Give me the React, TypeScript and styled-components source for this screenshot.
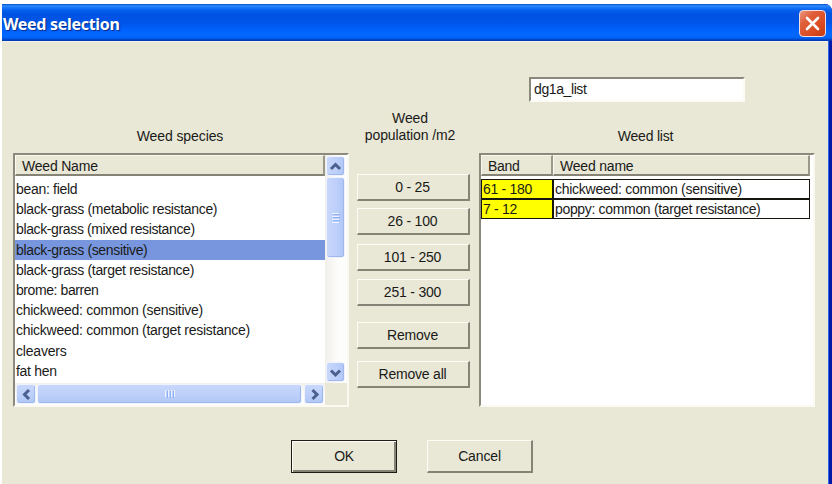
import React from 'react'
import styled, { createGlobalStyle, css } from 'styled-components'

type TextProps = { $tracking?: number }

const GlobalStyle = createGlobalStyle`
  * {
    box-sizing: border-box;
  }

  body {
    margin: 0;
    background: #fff;
    overflow: hidden;
    font-family: 'Liberation Sans', Arial, sans-serif;
    font-size: 14px;
    color: #1a1a18;
  }
`

const tracking = css<TextProps>`
  letter-spacing: ${({ $tracking = -0.3 }) => $tracking}px;
  white-space: nowrap;
`

// Main window
const StyledWindow = styled.div`
  display: flex;
  flex-direction: column;
  width: 830px;
  height: 480px;
  margin: 4px 0 0 2px;
  border-radius: 0 7px 0 0;
  overflow: hidden;
  background: #0019a8;
`

const StyledTitleBar = styled.header`
  display: flex;
  align-items: center;
  justify-content: space-between;
  flex: none;
  height: 37px;
  padding: 0 6px 0 1px;
  background: linear-gradient(
    to bottom,
    #0a50c8 0,
    #2f8cff 2px,
    #1f7dfb 3px,
    #0660ee 6px,
    #0053e2 10px,
    #0054e6 18px,
    #0060fb 25px,
    #0268ff 31px,
    #0062f4 34px,
    #0040bd 36px,
    #0038b0 37px
  );
`

const StyledTitle = styled.h1<TextProps>`
  ${tracking}
  margin: 3px 0 0;
  color: #fff;
  font-family: 'Noto Sans', sans-serif;
  font-size: 16px;
  line-height: 20px;
  font-weight: 700;
  text-shadow: 1px 1px 1px #0a2a86;
`

const StyledCloseButton = styled.button`
  display: flex;
  align-items: center;
  justify-content: center;
  width: 27px;
  height: 27px;
  margin-top: 1px;
  padding: 0;
  border: 1.5px solid #f3dfe0;
  border-radius: 4px;
  background: linear-gradient(135deg, #ea9a80 0%, #e0603c 30%, #d94a20 70%, #c23a12 100%);
`

const StyledBody = styled.main`
  flex: 1;
  margin-right: 4px;
  padding: 35px 0 0 11px;
  border-top: 1px solid #f4f3ea;
  background: #e9e8d7;
  box-shadow: 1px 0 0 #2a6ae8;
`

const StyledInput = styled.input`
  display: block;
  width: 216px;
  height: 25px;
  margin-left: 516px;
  padding: 0 3px 1px;
  border: 2px solid;
  border-color: #8a887a #fbfaf3 #fbfaf3 #8a887a;
  outline: 0;
  background: #fff;
  color: #1a1a18;
  font: inherit;
  letter-spacing: -0.4px;
`

const StyledColumns = styled.div`
  display: grid;
  grid-template-columns: 336px 130px 336px;
  height: 302px;
`

const StyledColumn = styled.section`
  display: flex;
  flex-direction: column;
`

const StyledLabel = styled.h2<TextProps & { $inset?: number }>`
  ${tracking}
  margin: 26px 0 8px;
  padding-right: ${({ $inset = 0 }) => $inset}px;
  font-size: 14px;
  line-height: 17px;
  font-weight: 400;
  text-align: center;
`

const StyledListBox = styled.div`
  flex: none;
  height: 254px;
  border: 2px solid;
  border-color: #8c8a7d #fbfaf2 #fbfaf2 #8c8a7d;
  background: #fff;
`

const StyledSpeciesGrid = styled.div`
  display: grid;
  grid-template-columns: 310px 22px;
  grid-template-rows: 228px 22px;
`

const StyledSpecies = styled.div`
  background: #fff;
  overflow: hidden;
`

const StyledHeader = styled.div`
  display: flex;
  height: 21px;
  margin-bottom: 3px;
`

const StyledHeaderCell = styled.div<TextProps & { $width: number }>`
  ${tracking}
  width: ${({ $width }) => $width}px;
  padding-left: 6px;
  border: solid;
  border-width: 1px 2px 2px 1px;
  border-color: #faf9f0 #9a9889 #858376 #faf9f0;
  background: #e9e8d7;
  line-height: 20px;
`

const StyledItem = styled.div<TextProps & { $selected?: boolean }>`
  ${tracking}
  height: 20.2px;
  padding-left: 1px;
  background: ${({ $selected }) => ($selected ? '#7796dd' : 'transparent')};
  line-height: 20px;
`

const StyledScrollbar = styled.div<{ $vertical?: boolean }>`
  display: flex;
  flex-direction: ${({ $vertical }) => ($vertical ? 'column' : 'row')};
  justify-content: space-between;
  padding: 1px;
  background: linear-gradient(${({ $vertical }) => ($vertical ? '90deg' : '180deg')}, #f0efea, #fdfdfb 60%);
`

const StyledScrollPiece = styled.div<{ $width: number; $height: number; $vertical?: boolean }>`
  display: flex;
  align-items: center;
  justify-content: center;
  width: ${({ $width }) => $width}px;
  height: ${({ $height }) => $height}px;
  border: 1px solid #eef3ff;
  border-radius: 3px;
  background: linear-gradient(${({ $vertical }) => ($vertical ? '90deg' : '180deg')}, #c8d7fb, #bccffa 60%, #b1c6f5);
  box-shadow: inset -1px -1px 0 #9fb8ec;
`

const StyledGroup = styled.div<{ $vertical?: boolean }>`
  display: flex;
  flex-direction: ${({ $vertical }) => ($vertical ? 'column' : 'row')};
  gap: 1px;
`

const StyledCorner = styled.div`
  background: #e9e8d7;
`

const StyledPopulation = styled.section`
  display: flex;
  flex-direction: column;
  padding-left: 8px;
`

const StyledPopulationLabel = styled.h2<TextProps>`
  ${tracking}
  width: 106px;
  margin: 8px 0 30px;
  font-size: 14px;
  line-height: 17px;
  font-weight: 400;
  text-align: center;
`

const StyledButton = styled.button<TextProps & { $gap?: number }>`
  ${tracking}
  flex: none;
  width: 113px;
  height: 27px;
  margin: ${({ $gap = 0 }) => $gap}px 0 0;
  padding: 0 1px 1px 0;
  border: solid;
  border-width: 1px 2px 2px 1px;
  border-color: #fdfcf5 #858376 #858376 #fdfcf5;
  background: #e9e8d7;
  color: #1a1a18;
  font: inherit;
  line-height: 20px;
`

const StyledBandRow = styled.div`
  display: flex;
  width: 329px;
  height: 20px;
  border: 1px solid #16160f;
  border-left: 0;
  line-height: 18px;
`

const StyledBand = styled.div<TextProps>`
  ${tracking}
  width: 73px;
  padding-left: 1px;
  border-left: 1px solid #16160f;
  border-right: 2px solid #16160f;
  background: #ff0;
`

const StyledBandName = styled.div<TextProps>`
  ${tracking}
  padding-left: 1px;
`

const StyledActions = styled.footer`
  display: flex;
  gap: 30px;
  padding: 36px 0 0 278px;
`

const StyledAction = styled(StyledButton)<{ $primary?: boolean }>`
  width: 106px;
  height: 33px;
  padding: 0;
  ${({ $primary }) =>
    $primary &&
    css`
      padding-bottom: 2px;
      border: 1px solid #1c1b16;
      box-shadow: inset 1px 1px 0 #fdfcf5, inset -2px -2px 0 #858376;
    `}
`

const ARROWS = {
  up: 'M2 9 6.5 4.5 11 9',
  down: 'M2 4.5 6.5 9 11 4.5',
  left: 'M9 2 4.5 6.5 9 11',
  right: 'M4.5 2 9 6.5 4.5 11',
}

const Arrow = ({ direction }: { direction: keyof typeof ARROWS }) => (
  <svg width="13" height="13" viewBox="0 0 13 13">
    <path d={ARROWS[direction]} fill="none" stroke="#4a618f" strokeWidth="3" />
  </svg>
)

// Grip lines in the middle of a scrollbar thumb
const Grip = ({ vertical }: { vertical?: boolean }) => (
  <svg width="10" height="10" viewBox="0 0 10 10">
    <g transform={vertical ? undefined : 'rotate(90 5 5)'}>
      <path d="M1 .5H8M1 3.5H8M1 6.5H8M1 9.5H8" stroke="#eef4fe" />
      <path d="M2 1.5H9M2 4.5H9M2 7.5H9" stroke="#8cb0f8" />
    </g>
  </svg>
)

const species: { name: string; tracking?: number; selected?: boolean }[] = [
  { name: 'bean: field' },
  { name: 'black-grass (metabolic resistance)', tracking: -0.33 },
  { name: 'black-grass (mixed resistance)', tracking: -0.37 },
  { name: 'black-grass (sensitive)', tracking: -0.34, selected: true },
  { name: 'black-grass (target resistance)', tracking: -0.33 },
  { name: 'brome: barren', tracking: -0.42 },
  { name: 'chickweed: common (sensitive)', tracking: -0.26 },
  { name: 'chickweed: common (target resistance)', tracking: -0.26 },
  { name: 'cleavers', tracking: -0.2 },
  { name: 'fat hen' },
]

const bands = [
  { band: '61 - 180', name: 'chickweed: common (sensitive)', tracking: -0.26 },
  { band: '7 - 12', name: 'poppy: common (target resistance)', tracking: -0.33 },
]

const populations = [
  { label: '0 - 25', gap: 0 },
  { label: '26 - 100', gap: 7 },
  { label: '101 - 250', gap: 9 },
  { label: '251 - 300', gap: 8 },
  { label: 'Remove', gap: 16 },
  { label: 'Remove all', gap: 12 },
]

const App = () => (
  <>
    <GlobalStyle />
    <StyledWindow>
      <StyledTitleBar>
        <StyledTitle $tracking={-0.3}>Weed selection</StyledTitle>
        <StyledCloseButton aria-label="Close">
          <svg width="17" height="17" viewBox="0 0 17 17">
            <path d="M3 3 14 14M14 3 3 14" stroke="#fff" strokeWidth="2.6" strokeLinecap="round" />
          </svg>
        </StyledCloseButton>
      </StyledTitleBar>
      <StyledBody>
        <StyledInput defaultValue="dg1a_list" />
        <StyledColumns>
          <StyledColumn>
            <StyledLabel $tracking={-0.1} $inset={2}>
              Weed species
            </StyledLabel>
            <StyledListBox>
              <StyledSpeciesGrid>
                <StyledSpecies>
                  <StyledHeader>
                    <StyledHeaderCell $tracking={-0.2} $width={310}>
                      Weed Name
                    </StyledHeaderCell>
                  </StyledHeader>
                  {species.map(({ name, tracking, selected }) => (
                    <StyledItem key={name} $tracking={tracking} $selected={selected}>
                      {name}
                    </StyledItem>
                  ))}
                </StyledSpecies>
                <StyledScrollbar $vertical>
                  <StyledGroup $vertical>
                    <StyledScrollPiece $vertical $width={19} $height={20}>
                      <Arrow direction="up" />
                    </StyledScrollPiece>
                    <StyledScrollPiece $vertical $width={19} $height={81}>
                      <Grip vertical />
                    </StyledScrollPiece>
                  </StyledGroup>
                  <StyledScrollPiece $vertical $width={19} $height={20}>
                    <Arrow direction="down" />
                  </StyledScrollPiece>
                </StyledScrollbar>
                <StyledScrollbar>
                  <StyledGroup>
                    <StyledScrollPiece $width={20} $height={20}>
                      <Arrow direction="left" />
                    </StyledScrollPiece>
                    <StyledScrollPiece $width={265} $height={20}>
                      <Grip />
                    </StyledScrollPiece>
                  </StyledGroup>
                  <StyledScrollPiece $width={20} $height={20}>
                    <Arrow direction="right" />
                  </StyledScrollPiece>
                </StyledScrollbar>
                <StyledCorner />
              </StyledSpeciesGrid>
            </StyledListBox>
          </StyledColumn>
          <StyledPopulation>
            <StyledPopulationLabel $tracking={-0.1}>
              Weed
              <br />
              population /m2
            </StyledPopulationLabel>
            {populations.map(({ label, gap }) => (
              <StyledButton key={label} $gap={gap} $tracking={-0.2}>
                {label}
              </StyledButton>
            ))}
          </StyledPopulation>
          <StyledColumn>
            <StyledLabel $tracking={-0.2} $inset={3}>
              Weed list
            </StyledLabel>
            <StyledListBox>
              <StyledHeader>
                <StyledHeaderCell $width={72}>Band</StyledHeaderCell>
                <StyledHeaderCell $width={257} $tracking={-0.2}>
                  Weed name
                </StyledHeaderCell>
              </StyledHeader>
              {bands.map(({ band, name, tracking }) => (
                <StyledBandRow key={band}>
                  <StyledBand>{band}</StyledBand>
                  <StyledBandName $tracking={tracking}>{name}</StyledBandName>
                </StyledBandRow>
              ))}
            </StyledListBox>
          </StyledColumn>
        </StyledColumns>
        <StyledActions>
          <StyledAction $primary>OK</StyledAction>
          <StyledAction $tracking={-0.15}>Cancel</StyledAction>
        </StyledActions>
      </StyledBody>
    </StyledWindow>
  </>
)

export default App
